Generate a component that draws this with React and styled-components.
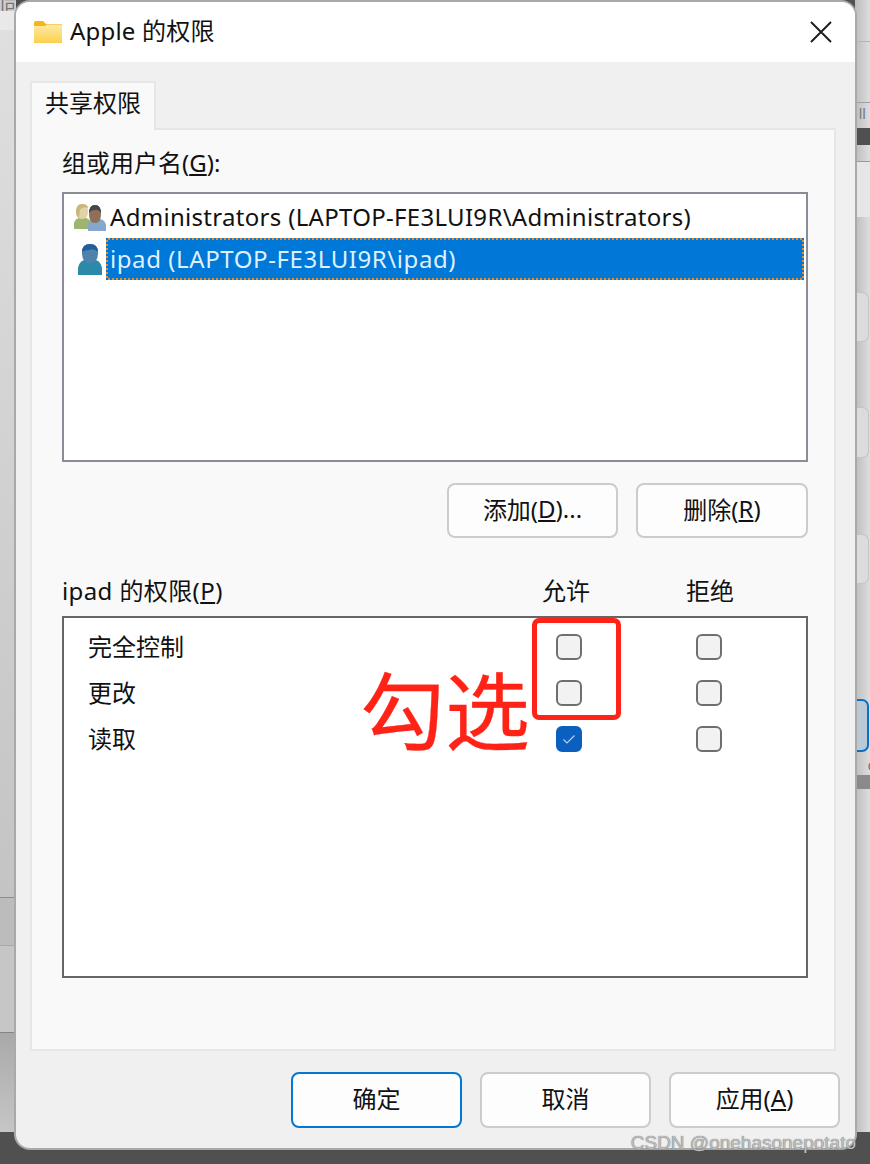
import React from "react";
import styled, { createGlobalStyle } from "styled-components";

const GlobalStyle = createGlobalStyle`
  html, body {
    margin: 0;
    padding: 0;
  }
  body {
    font-family: "Noto Sans", "Noto Sans CJK SC", sans-serif;
    color: #111;
  }
`;

const Page = styled.div`
  position: relative;
  display: flex;
  width: 870px;
  height: 1164px;
  overflow: hidden;
  background: #505050;
`;

const Edge = styled.div`
  display: flex;
  flex-direction: column;
  flex: none;
  width: ${(p) => p.$w}px;
  height: 1132px;
  overflow: hidden;
  background: linear-gradient(90deg, #d6d6d6, #bdbdbd);
`;

const RightEdge = styled(Edge)`
  background: linear-gradient(90deg, #bcbcbc, #dedede);
`;

const Band = styled.div`
  flex: none;
  height: ${(p) => p.$h}px;
  background: ${(p) => p.$bg || "transparent"};
  border-bottom: ${(p) => (p.$line ? `1px solid ${p.$line}` : "none")};
  box-sizing: border-box;
  overflow: hidden;
  color: #777;
  font-size: ${(p) => p.$fs || 14}px;
  line-height: ${(p) => p.$lh || 14}px;
`;

const BackButton = styled.div`
  flex: none;
  box-sizing: border-box;
  width: 12px;
  height: ${(p) => p.$h}px;
  margin: ${(p) => p.$top}px 0 0 2px;
  background: ${(p) => p.$bg || "#dcdcdc"};
  border: ${(p) => (p.$blue ? "2px solid #0a6fc8" : "1px solid #c4c4c4")};
  border-left: none;
  border-radius: 0 7px 7px 0;
`;

const Dialog = styled.div`
  flex: none;
  display: flex;
  flex-direction: column;
  width: 839px;
  height: 1146px;
  margin-top: 2px;
  border-radius: 14px;
  overflow: hidden;
  background: #f0f0f0;
  box-shadow: 0 0 0 2px #a9a9a9;
  z-index: 1;
`;

const TitleBar = styled.div`
  flex: none;
  display: flex;
  align-items: center;
  height: 60px;
  padding: 0 22px 0 18px;
  background: #fff;
`;

const Title = styled.div`
  flex: 1;
  margin-left: 8px;
  padding-bottom: 3px;
  font-size: 24px;
  line-height: 57px;
  letter-spacing: 0.2px;
`;

const CloseIcon = styled.svg`
  display: block;
  width: 24px;
  height: 24px;
`;

const Body = styled.div`
  flex: 1;
  display: flex;
  flex-direction: column;
  padding: 19px 19px 0 14px;
`;

const Tab = styled.div`
  position: relative;
  z-index: 1;
  box-sizing: border-box;
  width: 126px;
  height: 49px;
  margin-bottom: -2px;
  padding-left: 13px;
  background: #f9f9f9;
  border: 2px solid #e6e6e6;
  border-bottom: none;
  font-size: 24px;
  line-height: 40px;
`;

const Panel = styled.div`
  box-sizing: border-box;
  display: flex;
  flex-direction: column;
  height: 923px;
  padding: 18px 26px 0 30px;
  background: #f9f9f9;
  border: 2px solid #e6e6e6;
`;

const Label = styled.div`
  font-size: 24px;
  line-height: 30px;
  height: 30px;
`;

const UserList = styled.div`
  box-sizing: border-box;
  height: 270px;
  margin-top: 14px;
  padding: 2px 2px 0 0;
  background: #fff;
  border: 2px solid #8a8d96;
`;

const UserRow = styled.div`
  display: flex;
  align-items: stretch;
  height: 42px;
  padding-left: 10px;
`;

const UserIconBox = styled.div`
  flex: none;
  display: flex;
  justify-content: center;
  align-items: center;
  width: 32px;
`;

const UserName = styled.div`
  flex: 1;
  box-sizing: border-box;
  padding-left: 2px;
  font-size: 24px;
  line-height: 38px;
  letter-spacing: ${(p) => (p.$selected ? 0.58 : 0.3)}px;
  white-space: nowrap;
  border: 2px solid transparent;
  background: ${(p) =>
    p.$selected
      ? "linear-gradient(#0078d7, #0078d7) padding-box, repeating-conic-gradient(#f28a1e 0 25%, #0078d7 0 50%) 0 0 / 4px 4px border-box"
      : "transparent"};
  color: ${(p) => (p.$selected ? "#dff0ff" : "#111")};
`;

const ButtonRow = styled.div`
  display: flex;
  justify-content: flex-end;
  gap: ${(p) => p.$gap}px;
  margin-top: ${(p) => p.$top}px;
`;

const DialogButton = styled.div`
  box-sizing: border-box;
  display: flex;
  justify-content: center;
  align-items: center;
  width: ${(p) => p.$w || 171}px;
  height: ${(p) => p.$h}px;
  padding-bottom: 5px;
  background: #fdfdfd;
  border: 2px solid ${(p) => (p.$primary ? "#0078d4" : "#cccccc")};
  border-radius: 8px;
  font-size: 24px;
`;

const PermHeader = styled.div`
  display: grid;
  grid-template-columns: 480px 144px 48px;
  margin-top: 38px;
  font-size: 24px;
  line-height: 30px;
`;

const PermTitle = styled.div`
  letter-spacing: 0.4px;
`;

const PermBox = styled.div`
  box-sizing: border-box;
  height: 362px;
  margin-top: 10px;
  padding: 6px 0 0 24px;
  background: #fff;
  border: 2px solid #666;
`;

const PermRow = styled.div`
  display: grid;
  grid-template-columns: 468px 140px 26px;
  align-items: center;
  height: 46px;
  font-size: 24px;
`;

const PermName = styled.div`
  padding-bottom: 4px;
`;

const Check = styled.div`
  box-sizing: border-box;
  display: flex;
  justify-content: center;
  align-items: center;
  width: 26px;
  height: 26px;
  border-radius: 6px;
  background: ${(p) => (p.$checked ? "#0a5fbf" : "#f2f2f2")};
  border: 2px solid ${(p) => (p.$checked ? "#0a5fbf" : "#6f6f6f")};
`;

const CheckMark = styled.svg`
  display: block;
  width: 16px;
  height: 16px;
`;

const Footer = styled.div`
  display: flex;
  justify-content: flex-end;
  gap: 18px;
  margin: 21px -4px 0 0;
`;

const RedBox = styled.div`
  position: absolute;
  z-index: 2;
  left: 532px;
  top: 618px;
  box-sizing: border-box;
  width: 89px;
  height: 102px;
  border: 5px solid #ff2216;
  border-radius: 7px;
`;

const RedText = styled.div`
  position: absolute;
  z-index: 2;
  left: 360px;
  top: 655px;
  font-size: 85px;
  line-height: 112px;
  color: #ff2216;
  -webkit-text-stroke: 0.3px #ff2216;
  white-space: nowrap;
`;

const Watermark = styled.div`
  position: absolute;
  z-index: 3;
  right: 14px;
  top: 1132px;
  font-family: "Liberation Sans", Arial, sans-serif;
  font-size: 19px;
  line-height: 22px;
  color: #bdbdbd;
  text-shadow: 0 0 1px #555;
  white-space: nowrap;
`;

const FolderIcon = () => (
  <svg width="28" height="22" viewBox="0 0 28 22">
    <defs>
      <linearGradient id="folderFill" x1="0" y1="0" x2="0" y2="1">
        <stop offset="0" stopColor="#fdeaa6" />
        <stop offset="1" stopColor="#fbd04e" />
      </linearGradient>
    </defs>
    <path d="M0 2 Q0 0 2 0 H9 L12 3 H28 V8 H0 Z" fill="#f6b51c" />
    <path d="M0 5 H11 L13 3.5 H28 V22 H0 Z" fill="url(#folderFill)" />
  </svg>
);

const GroupIcon = () => (
  <svg width="32" height="28" viewBox="0 0 32 28">
    <path d="M0 26 V20 Q1 16 5 15 H12 Q16 16 17 20 V26 Z" fill="#9db56c" />
    <path d="M2 9 Q2 1 8 1 Q14 1 14 9 Q14 16 8 16 Q2 16 2 9 Z" fill="#e3d3a4" />
    <path d="M2 9 Q2 1 8 1 Q14 1 14 5 Q8 3 6 7 L5 15 Q2 13 2 9 Z" fill="#cdb67c" />
    <path d="M14 28 V22 Q15 17 19 16 H26 Q31 17 32 22 V28 Z" fill="#85a7cc" />
    <path d="M15 11 Q15 2 21 2 Q27 2 27 11 Q27 20 21 20 Q15 20 15 11 Z" fill="#8f6f58" />
    <path d="M15 10 Q15 2 21 2 Q27 2 27 10 Q24 6 21 7 Q17 7 15 10 Z" fill="#45464a" />
  </svg>
);

const UserIcon = () => (
  <svg width="24" height="32" viewBox="0 0 24 32">
    <path d="M0 32 V25 Q1 19 6 17 H18 Q23 19 24 25 V32 Z" fill="#2a8aa8" />
    <path d="M4 10 Q4 1 12 1 Q20 1 20 10 Q20 20 12 20 Q4 20 4 10 Z" fill="#4f82ab" />
    <path d="M4 9 Q4 1 12 1 Q20 1 20 9 Q16 5 11 7 Q7 7 4 9 Z" fill="#1f5f9c" />
  </svg>
);

const users = [
  { name: "Administrators (LAPTOP-FE3LUI9R\\Administrators)", icon: <GroupIcon /> },
  { name: "ipad (LAPTOP-FE3LUI9R\\ipad)", icon: <UserIcon />, selected: true },
];

const perms = [
  { name: "完全控制", allow: false },
  { name: "更改", allow: false },
  { name: "读取", allow: true },
];

const App = () => {
  return (
    <Page>
      <GlobalStyle />
      <Edge $w={16}>
        <Band $h={11} $bg="#cfcfcf" $fs={20} $lh={10}>同</Band>
        <Band $h={19} $bg="#e9e9e9" />
        <Band $h={868} $bg="linear-gradient(180deg, #dfdfdf, #c4c4c4)" $line="#8d8d8d" />
        <Band $h={48} $bg="#bcbcbc" $line="#a9a9a9" />
        <Band $h={87} $bg="#c6c6c6" $line="#858585" />
        <Band $h={99} $bg="linear-gradient(180deg, #a9a9a9, #c6c6c6)" />
      </Edge>
      <Dialog>
        <TitleBar>
          <FolderIcon />
          <Title>Apple 的权限</Title>
          <CloseIcon viewBox="0 0 24 24">
            <path d="M2 2 L22 22 M22 2 L2 22" stroke="#1c1c1c" strokeWidth="1.9" fill="none" />
          </CloseIcon>
        </TitleBar>
        <Body>
          <Tab>共享权限</Tab>
          <Panel>
            <Label>
              组或用户名(<u>G</u>):
            </Label>
            <UserList>
              {users.map((u) => (
                <UserRow key={u.name}>
                  <UserIconBox>{u.icon}</UserIconBox>
                  <UserName $selected={u.selected}>{u.name}</UserName>
                </UserRow>
              ))}
            </UserList>
            <ButtonRow $gap={18} $top={21}>
              <DialogButton $h={55}>
                添加(<u>D</u>)...
              </DialogButton>
              <DialogButton $h={55} $w={172}>
                删除(<u>R</u>)
              </DialogButton>
            </ButtonRow>
            <PermHeader>
              <PermTitle>
                ipad 的权限(<u>P</u>)
              </PermTitle>
              <div>允许</div>
              <div>拒绝</div>
            </PermHeader>
            <PermBox>
              {perms.map((p) => (
                <PermRow key={p.name}>
                  <PermName>{p.name}</PermName>
                  <Check $checked={p.allow}>
                    {p.allow && (
                      <CheckMark viewBox="0 0 16 16">
                        <path d="M2.5 8.5 L6 12 L13.5 4.5" stroke="#b7d3f2" strokeWidth="1.2" fill="none" />
                      </CheckMark>
                    )}
                  </Check>
                  <Check />
                </PermRow>
              ))}
            </PermBox>
          </Panel>
          <Footer>
            <DialogButton $h={56} $primary>确定</DialogButton>
            <DialogButton $h={56}>取消</DialogButton>
            <DialogButton $h={56}>
              应用(<u>A</u>)
            </DialogButton>
          </Footer>
        </Body>
      </Dialog>
      <RightEdge $w={15}>
        <Band $h={42} $line="#b5b5b5" />
        <Band $h={61} $line="#a0a0a0" />
        <Band $h={25} $fs={14} $lh={22}>&nbsp;ll</Band>
        <Band $h={17} $bg="#505050" />
        <Band $h={17} $line="#9a9a9a" />
        <Band $h={55} $bg="#e6e6e6" />
        <BackButton $h={50} $top={75} />
        <BackButton $h={51} $top={65} />
        <BackButton $h={50} $top={76} />
        <BackButton $h={53} $top={115} $blue $bg="#b9c9d6" />
        <Band $h={23} $fs={16} $lh={26}>&nbsp;&nbsp;&nbsp;c</Band>
        <Band $h={14} $bg="#8a8a8a" />
      </RightEdge>
      <RedBox />
      <RedText>勾选</RedText>
      <Watermark>CSDN @onehasonepotato</Watermark>
    </Page>
  );
};

export default App;
